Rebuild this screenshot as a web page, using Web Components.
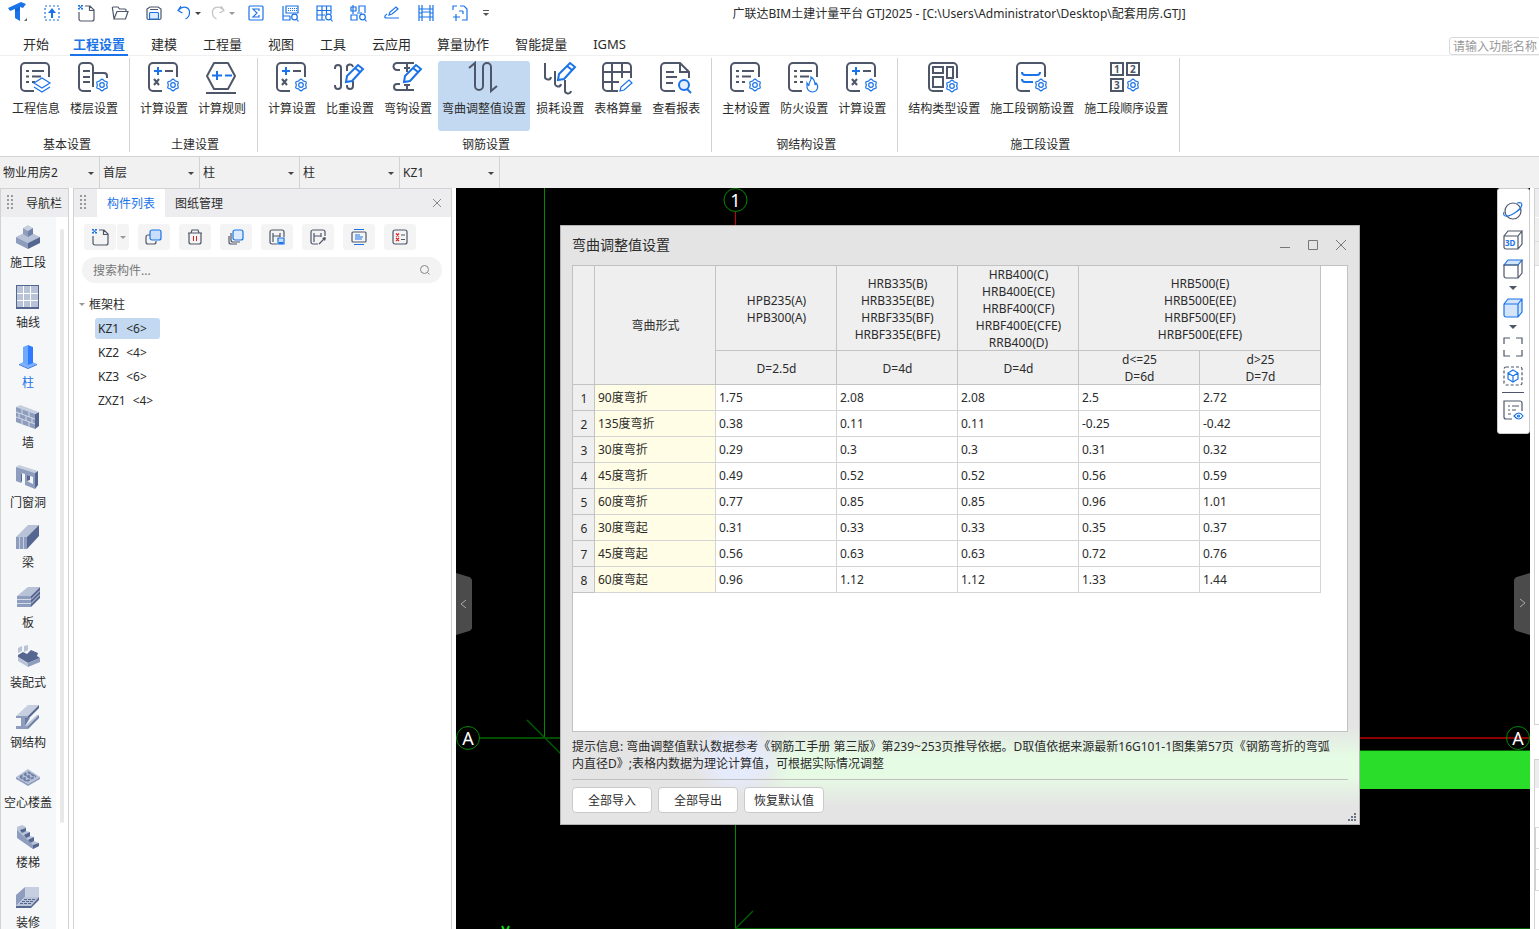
<!DOCTYPE html>
<html lang="zh-CN">
<head>
<meta charset="utf-8">
<title>广联达BIM土建计量平台 GTJ2025</title>
<style>
  html, body {
    margin: 0;
    height: 100%;
  }

  body {
    --blue: #1a73e8;
    --ink: #4e5769;
    --line: #d2d2d2;
    --select: #c2d9f1;
    font: 12px/17px "Noto Sans", "Noto Sans CJK SC", sans-serif;
    color: #2b2b2b;
    background: #fff;
    display: flex;
    flex-direction: column;
    overflow: hidden;
  }

  main {
    flex: 1;
    min-height: 0;
    display: flex;
  }
</style>
</head>
<body>
<title-bar>广联达BIM土建计量平台 GTJ2025 - [C:\Users\Administrator\Desktop\配套用房.GTJ]</title-bar>
<menu-bar></menu-bar>
<ribbon-bar>
  <ribbon-group label="基本设置">
    <ribbon-button icon="info">工程信息</ribbon-button>
    <ribbon-button icon="floor">楼层设置</ribbon-button>
  </ribbon-group>
  <ribbon-group label="土建设置">
    <ribbon-button icon="calc">计算设置</ribbon-button>
    <ribbon-button icon="rule">计算规则</ribbon-button>
  </ribbon-group>
  <ribbon-group label="钢筋设置">
    <ribbon-button icon="calc">计算设置</ribbon-button>
    <ribbon-button icon="weight">比重设置</ribbon-button>
    <ribbon-button icon="hook">弯钩设置</ribbon-button>
    <ribbon-button icon="bend" active>弯曲调整值设置</ribbon-button>
    <ribbon-button icon="loss">损耗设置</ribbon-button>
    <ribbon-button icon="sheet">表格算量</ribbon-button>
    <ribbon-button icon="report">查看报表</ribbon-button>
  </ribbon-group>
  <ribbon-group label="钢结构设置">
    <ribbon-button icon="material">主材设置</ribbon-button>
    <ribbon-button icon="fire">防火设置</ribbon-button>
    <ribbon-button icon="calc">计算设置</ribbon-button>
  </ribbon-group>
  <ribbon-group label="施工段设置">
    <ribbon-button icon="struct">结构类型设置</ribbon-button>
    <ribbon-button icon="rebar">施工段钢筋设置</ribbon-button>
    <ribbon-button icon="order">施工段顺序设置</ribbon-button>
  </ribbon-group>
</ribbon-bar>
<filter-bar></filter-bar>
<main>
  <nav-panel></nav-panel>
  <component-panel></component-panel>
  <drawing-view>
    <view-tools slot="tools"></view-tools>
    <bend-dialog slot="dialog"></bend-dialog>
  </drawing-view>
  <side-strip></side-strip>
</main>

<script>
// six-lobed settings gear
function gear(cx, cy, r = 6) {
  let d = "";
  for (let i = 0; i <= 24; i++) {
    const a = (i / 24) * Math.PI * 2;
    const k = r - 0.7 + 0.7 * Math.cos(a * 6);
    d += (i ? "L" : "M") + (cx + k * Math.sin(a)).toFixed(1) + " " + (cy - k * Math.cos(a)).toFixed(1);
  }
  return `<path class="b t" d="${d}z"/><circle class="b t" cx="${cx}" cy="${cy}" r="2.3"/>`;
}

const openFrame = '<path class="d" d="M29 16V6a4 4 0 0 0-4-4H5a4 4 0 0 0-4 4v20a4 4 0 0 0 4 4h9"/>';
const listRows = '<path class="d" d="M6 10h3M12 10h12M6 15.5h3M12 15.5h9M6 21h3M12 21h3"/>';
const pencil = (x, y) => `<g transform="translate(${x} ${y})"><path class="b" fill="#fff" d="M1 18l1-6L13 1l5 4L7 17zM10 4l5 4"/></g>`;
const page = '<path class="d t" d="M9 3h5l4 4v9a2 2 0 0 1-2 2H5a2 2 0 0 1-2-2V9M13.5 3v4.5H18"/>' +
  '<path fill="#1a73e8" d="M2 2h2v1.5H2zM5 2h2v1.5H5zM3.5 3.5h2V5h-2zM2 5h2v1.5H2zM5 5h2v1.5H5z"/>';
const lens = '<circle class="b t" cx="14.5" cy="14" r="2.8"/><path class="b t" d="M16.5 16l2 2.5"/>';

// name: [viewBox size, markup]
const ICONS = {
  logo: [24, '<path fill="#1a73e8" d="M2 7L15 1l5 2-3 4-3-1v14l-5-3V8L4 10z"/><path fill="#0b4fd0" d="M9 8l5-2v3l-5 2z" opacity=".4"/><path fill="#666" d="M21 17v3h-3z"/>'],
  upload: [20, '<path class="b t" stroke-dasharray="2 2" d="M3 3h14v14H3z"/><path fill="#1a73e8" d="M10 5l4 5h-3v5H9v-5H6z"/>'],
  page: [20, page],
  open: [20, '<path class="d t" d="M4 16L2.5 5.5a1 1 0 0 1 1-1.5H8l1.5 2H15a1 1 0 0 1 1 1v1.5M4 16h11.5L18 8.5H7z"/>'],
  save: [20, '<path class="d t" d="M3 15V6l3-2h8l3 2v9a1.5 1.5 0 0 1-1.5 1.5h-11A1.5 1.5 0 0 1 3 15zM6 6.5h8"/><path class="b t" fill="#dcebff" d="M5.5 16v-5.5a1 1 0 0 1 1-1h7a1 1 0 0 1 1 1V16z"/>'],
  undo: [20, '<path class="b t" d="M7 3L4 7.5 8.5 10M4.5 7C9 2 16 4 15.500 10c0 3-2 5-4 6"/>'],
  redo: [20, '<path fill="none" stroke="#c4c4c4" stroke-width="1.3" d="M13 3l3 4.5-4.5 2.5M15.5 7C11 2 4 4 4.500 10c0 3 2 5 4 6"/>'],
  sum: [20, '<rect class="b t" x="3" y="3" width="14" height="14" rx="1"/><path class="b t" d="M13 8V6H7l4 4-4 4h6v-2"/>'],
  calcView: [20, '<path class="b t" d="M6 3h12v7H6zM3 3v14h7v-4M3 13h7"/><path stroke="#1a73e8" stroke-dasharray="1 1" d="M8 5.5h9M8 7.5h9"/>' + lens],
  gridView: [20, '<path class="b t" d="M11 17H3V3h14v8M3 7.5h14M3 12h8M8 3v14M12.5 3v8"/>' + lens],
  shapeView: [20, '<path class="b t" d="M3 4h5v4H3zM5 2v9M3 12h6v5H3zM11 9V3h6v7M9 10h5"/>' + lens],
  draw: [20, '<path class="b t" d="M7 12l1-3 6-5 2 2-6 5zM5 11c-3 2-3 4 0 4h12"/>'],
  film: [20, '<path class="b t" d="M3 2v16M6 2v16M14 2v16M17 2v16M3 6h14M3 14h14M6 9h8M3 10h3M14 10h3"/>'],
  select: [20, '<path class="b t" d="M3 7V3h4M10 3h4l3 3v8M17 14v3h-5M3 14h7M6 11v7M9 8h4M13 8v3"/>'],
  more: [10, '<path stroke="#555" d="M2 2.5h6"/><path fill="#555" d="M2 5h6L5 8z"/>'],
  caret: [8, '<path fill="#444" d="M1 3h6L4 6z"/>'],
  caretGrey: [8, '<path fill="#999" d="M1 3h6L4 6z"/>'],
  caretWide: [8, '<path fill="#4e5769" d="M0 2h8L4 6z"/>'],

  info: [32, openFrame + listRows + '<path fill="#fff" class="b t" d="M14 22l8-5 8 5-8 5zM14 26l8 5 8-5"/>'],
  floor: [32, '<path class="d" d="M13 30H5a4 4 0 0 1-4-4V6a4 4 0 0 1 4-4h6a4 4 0 0 1 4 4v20M5 10h7M5 16h7M5 21h7M15 12h11a3 3 0 0 1 3 3v2"/>' + gear(24, 24)],
  calc: [32, openFrame + '<path class="b" d="M10 6v8M6 10h8"/><path class="d" d="M17 10h8M6 18l5 6M11 18l-5 6"/>' + gear(25, 24)],
  rule: [32, '<path class="d" stroke-linejoin="round" d="M1 15L8 2h14l7 13-7 13H8zM0 32h30"/><path class="b" d="M11 10v9M6 14.5h10M19 14.5h7"/>'],
  weight: [32, '<path class="d" d="M1 8V7a3 3 0 0 1 6 0v18a3 3 0 0 1-6 0v-1M13 10V7a3 3 0 0 1 6-1M19 20v5a3 3 0 0 1-6 0v-1"/>' + pencil(11, 3)],
  hook: [32, '<path class="d" d="M22 2H5a3 3 0 0 0 0 7h3M15 2v9M12 7h6M22 29H5a3 3 0 0 1 0-6h3M15 23v6M12 24h6"/>' + pencil(11, 3)],
  bend: [32, '<path class="d" d="M1 7l6-5v23a4 4 0 0 0 8 0V6a4 4 0 0 1 8 0v24l6-5"/>'],
  loss: [32, '<path class="d" d="M1 2v13a3 3 0 0 0 6 1M11 10v12a3 3 0 0 0 6 1M21 19v10a3 3 0 0 0 6 1"/>' + pencil(13, 1)],
  sheet: [32, '<path class="d" d="M29 17V6a4 4 0 0 0-4-4H5a4 4 0 0 0-4 4v20a4 4 0 0 0 4 4h11M1 11h28M1 21h16M10 2v28M20 2v15"/><path class="b t" fill="#fff" d="M18 30l1-4 8-7 3 3-8 7z"/>'],
  report: [32, '<path class="d" d="M15 30H5a4 4 0 0 1-4-4V6a4 4 0 0 1 4-4h15l9 9v6M20 3v8h8M6 11h8M6 16h11M6 22h7"/><circle class="b" cx="24" cy="24" r="5" fill="#e4efff"/><path class="b" d="M27 28l4 4"/>'],
  material: [32, openFrame + listRows + gear(25, 24)],
  fire: [32, openFrame + listRows + '<path class="b t" fill="#fff" d="M19 22c0 3-1 8 5 9 6 0 7-6 4-9l-1 2c0-4-1-6-4-8 1 4-3 5-2 9z"/>'],
  struct: [32, '<path class="d" d="M29 17V6a4 4 0 0 0-4-4H5a4 4 0 0 0-4 4v20a4 4 0 0 0 4 4h10M5 6h10v6H5zM19 6h6v11h-6zM5 16h10v10H5z"/>' + gear(24, 25)],
  rebar: [32, openFrame + '<path class="b" d="M6 11q0 3 3 3h12q3 0 3-3M6 18q0 3 3 3h8"/>' + gear(25, 24)],
  order: [32, '<path class="d" d="M1 2h12v12H1zM17 2h12v12H17zM1 18h12v12H1z"/><text x="4" y="12">1</text><text x="20" y="12">2</text><text x="4" y="28">3</text>' + gear(23, 24)],

  copy: [20, '<path class="d t" d="M6 8H4a2 2 0 0 0-2 2v5a2 2 0 0 0 2 2h6a2 2 0 0 0 2-2v-1"/><rect class="b t" x="6" y="3" width="11" height="10" rx="2" fill="#c9defa"/>'],
  trash: [20, '<path class="d t" d="M3 6h14M6 6l1-3h6l1 3M4 6v9a2 2 0 0 0 2 2h8a2 2 0 0 0 2-2V6"/><path stroke="#e02020" d="M8.5 9v5M11.5 9v5"/>'],
  layers: [20, '<path class="d t" d="M5 6v7a2 2 0 0 0 2 2h7M3 9v6a2 2 0 0 0 2 2h6"/><rect class="b t" x="7" y="3" width="10" height="10" rx="2" fill="#dcebff"/>'],
  saveCom: [20, '<path class="d t" d="M10 17H5a2 2 0 0 1-2-2V5a2 2 0 0 1 2-2h10a2 2 0 0 1 2 2v5M6 6v9M6 9h7M13 6v4"/><path class="b t" fill="#c9defa" d="M11 11h6v6h-6z"/><path fill="#1a73e8" d="M12 15h4v2h-4z"/>'],
  pickCom: [20, '<path class="d t" d="M10 17H5a2 2 0 0 1-2-2V5a2 2 0 0 1 2-2h10a2 2 0 0 1 2 2v4M6 6v9M6 9h7M13 6v4M11 17l5-5"/><path fill="#4e5769" d="M14 11l3-1 1 1-1 3z"/>'],
  sort: [20, '<path class="b t" d="M5 2.500h10M5 17.500h10"/><rect class="d t" x="3" y="5" width="14" height="10" rx="1"/><path class="b t" d="M6 8h5M6 10h8M6 12h7"/>'],
  check: [20, '<rect class="d t" x="3" y="3" width="14" height="14" rx="2"/><path class="d t" d="M11 8h4M11 12.5h4"/><path stroke="#e02020" stroke-width="1.2" d="M6 6.5l3 3M9 6.5l-3 3M6 11l3 3M9 11l-3 3"/>'],
  search: [14, '<circle cx="6.5" cy="6.5" r="4" fill="none" stroke="#888"/><path stroke="#888" d="M9.5 9.5l2 2"/>'],
  close: [12, '<path stroke="#888" d="M2 2l8 8M10 2l-8 8"/>'],

  stage: [24, '<path fill="#b9c3d8" d="M0 12l12-6 12 6-12 6z"/><path fill="#8e9dbd" d="M0 12l12 6v6L0 18z"/><path fill="#556691" d="M24 12l-12 6v6l12-6z"/><path fill="#c6cfdf" d="M7 3l5-3 5 3-5 3z"/><path fill="#8e9dbd" d="M7 3l5 3v6l-5-3z"/><path fill="#6f80a6" d="M17 3l-5 3v6l5-3z"/>'],
  axis: [24, '<path fill="#556691" d="M0 0h23v24H0z"/><path fill="#b9c3d8" d="M1 1h21v21H1z"/><path stroke="#fff" d="M7.5 1v21M14.5 1v21M1 8.5h21M1 15.5h21"/>'],
  column: [24, '<path fill="#7db0ff" d="M3 19l9-4 9 4-9 4z"/><path fill="#2f6fe8" d="M3 19l9 4v1l-9-4zM21 19l-9 4v1l9-4z"/><path fill="#6ea8ff" d="M7 2l5-2v20l-5-2z"/><path fill="#2f7bff" d="M12 0l5 2v16l-5 2z"/>'],
  wall: [24, '<path fill="#556691" d="M19 9l4-2v14l-4 3z"/><path fill="#c6cfdf" d="M0 2l4-2 19 7-4 2z"/><path fill="#8e9dbd" d="M0 2l19 7v15L0 17z"/><path fill="none" stroke="#d3dae8" d="M0 7l19 7M0 12l19 7M6 4v5M13 7v5M3 8v5M10 11v5M16 13v5M6 14v5M13 17v5"/>'],
  door: [24, '<path fill="#c6cfdf" d="M0 2l3-2 19 6-3 2z"/><path fill="#556691" d="M19 8l3-2v14l-3 4z"/><path fill="#8e9dbd" fill-rule="evenodd" d="M0 2l19 6v16L9 20V9L5 8v10l-5-2zM11 10v6l6 3v-7z"/><path fill="#556691" d="M5 8l1 1v7l-1 2zM11 16l3-1v-4l-3-1z"/>'],
  beam: [24, '<path fill="#b9c3d8" d="M0 12L12 0h11L11 12z"/><path fill="#556691" d="M11 12L23 0v11L11 24z"/><path fill="#8e9dbd" d="M0 12h11v12H0z"/><path stroke="#c6cfdf" d="M3.5 12v12M7.5 12v12"/>'],
  slab: [24, '<path fill="#b9c3d8" d="M1 11L12 2h12L15 11z"/><path fill="#8e9dbd" d="M1 11h14v11H1z"/><path fill="#556691" d="M15 11l9-9v11l-9 9z"/><path fill="none" stroke="#d3dae8" d="M1 14.5h14l9-9M1 18.5h14l9-9"/>'],
  precast: [24, '<path fill="#556691" d="M2 10l5-3 4 2 4-4 7 3-1 3 3 2-12 5-10-6z"/><path fill="#b9c3d8" d="M2 3l4-2v5L2 8zM8 1l4-1v5L8 7zM2 12l10 6v4L2 16z"/><path fill="#8e9dbd" d="M12 18l12-5v4l-12 5z"/>'],
  steel: [24, '<path fill="#c6cfdf" d="M0 11L12 0h11L12 11z"/><path fill="#556691" d="M12 11L23 0v3L12 14H9v-3z"/><path fill="#8e9dbd" d="M0 11h12v2H0zM5 13h4v8H5zM0 21h12v3H0z"/><path fill="#b9c3d8" d="M9 21l12-11h2l-11 11z"/><path fill="#6f80a6" d="M9 14l5-1-5 8zM12 21l11-11v3L12 24z"/>'],
  hollow: [24, '<path fill="#b9c3d8" d="M0 12l12-8 12 8-12 7z"/><path fill="#8e9dbd" d="M0 12l12 7 12-7v2l-12 7L0 14z"/><path stroke="#6f80a6" stroke-width="2" stroke-dasharray="3 1.5" d="M4 12l8-5M7 14l9-5M11 16l9-5M4 12l8 5M8 9l8 5M12 7l8 5"/>'],
  stair: [24, '<path fill="#b9c3d8" d="M1 2l5-2 4 2v4l4 1v4l4 1v4l5 2v3l-6 3L1 12z"/><path fill="#556691" d="M4 5l6-2v3l-4 2zM8 10l6-3v4l-4 2zM12 15l6-3v4l-4 2zM17 20l6-2v3l-6 3z"/><path fill="#8e9dbd" d="M1 5l16 15v4L1 13z"/>'],
  finish: [24, '<path fill="#8e9dbd" d="M0 10L9 2v10L0 21z"/><path fill="#c6cfdf" d="M9 2h14v10H9z"/><path fill="#b9c3d8" d="M0 21l9-9h14l-8 9z"/><path fill="#556691" d="M15 21l8-9v3l-8 8H0v-2z"/><path fill="none" stroke="#556691" stroke-dasharray="3 1" d="M8 14.500h12M6 16.500h12M4 18.500h12"/>'],

  orbit: [20, '<circle class="d t" cx="10" cy="10" r="8"/><path class="b t" d="M14 2c8-2 5 5-1 9-7 5-14 6-12 0"/>'],
  cube3d: [20, '<path class="d t" d="M1 6h14v13H3a2 2 0 0 1-2-2zM1 6l4-5h14l-4 5M19 1v13l-4 5"/><text class="s" x="2" y="16">3D</text>'],
  cubeTop: [20, '<path class="b t" fill="#d3e4fb" d="M1 6l4-5h14l-4 5z"/><path class="d t" d="M1 6h14v13H3a2 2 0 0 1-2-2zM19 1v13l-4 5"/>'],
  cubeFull: [20, '<path class="b t" fill="#d3e4fb" d="M1 6l4-5h14v13l-4 5H3a2 2 0 0 1-2-2zM1 6h14v13M15 6l4-5"/>'],
  frame: [20, '<path class="d t" d="M1 7V1h6M13 1h6v6M19 13v6h-6M7 19H1v-6"/>'],
  cubeDash: [20, '<rect class="d t" stroke-dasharray="3 2" x="1" y="1" width="18" height="18" rx="2"/><path class="b t" d="M10 4l5 3v6l-5 3-5-3V7zM5 7l5 3 5-3M10 10v6"/>'],
  display: [20, '<path class="d t" d="M19 11V3a2 2 0 0 0-2-2H1v16a2 2 0 0 0 2 2h6M5 6h2M9 6h7M5 10h2M9 10h4M5 14h3"/><path class="b t" d="M11 16q5-6 9 0-4 6-9 0z"/><circle class="b t" cx="15.5" cy="16" r="1"/>'],
};

class UiIcon extends HTMLElement {
  connectedCallback() {
    const [size, art] = ICONS[this.getAttribute("name")];
    this.attachShadow({ mode: "open" }).innerHTML = `
      <style>
        :host { display: block; flex: none; }
        svg { display: block; overflow: visible; }
        .d, .b { stroke-width: 2; }
        .d { stroke: var(--ink); }
        .b { stroke: var(--blue); }
        .d:not([fill]), .b:not([fill]) { fill: none; }
        .t { stroke-width: 1.2; }
        text { font: bold 10px "Noto Sans", sans-serif; fill: var(--ink); }
        .s { font-size: 8px; fill: var(--blue); }
      </style>
      <svg width="${size}" height="${size}" viewBox="0 0 ${size} ${size}" aria-hidden="true">${art}</svg>
    `;
  }
}
customElements.define("ui-icon", UiIcon);

class TitleBar extends HTMLElement {
  constructor() {
    super();
    this.attachShadow({ mode: "open" });
    const tools = ["logo", "upload", "page", "open", "save", "undo", "redo", "sum", "calcView",
      "gridView", "shapeView", "draw", "film", "select"];
    this.shadowRoot.innerHTML = `
      <style>
        :host { display: flex; box-sizing: border-box; height: 28px; padding: 0 0 2px 1px; align-items: center; }
        button {
          display: flex;
          align-items: center;
          justify-content: center;
          width: 34px;
          height: 26px;
          padding: 0;
          border: 0;
          background: none;
        }
        button.more { width: 18px; }
        h1 { flex: 1; margin: 0; padding-right: 116px; font: inherit; text-align: center; white-space: nowrap; }
      </style>
      ${tools.map((t) => `<button aria-label="${t}"><ui-icon name="${t}"></ui-icon>${
        t === "undo" ? '<ui-icon name="caret"></ui-icon>' : t === "redo" ? '<ui-icon name="caretGrey"></ui-icon>' : ""
      }</button>`).join("")}
      <button class="more" aria-label="more"><ui-icon name="more"></ui-icon></button>
      <h1><slot></slot></h1>
    `;
  }
}
customElements.define("title-bar", TitleBar);

class MenuBar extends HTMLElement {
  constructor() {
    super();
    this.attachShadow({ mode: "open" });
    const items = ["开始", "工程设置", "建模", "工程量", "视图", "工具", "云应用", "算量协作", "智能提量", "IGMS"];
    this.shadowRoot.innerHTML = `
      <style>
        :host {
          display: flex;
          justify-content: space-between;
          height: 27px;
          border-bottom: 1px solid #f0f0f0;
          font-size: 13px;
        }
        nav { display: flex; padding-left: 10px; }
        a {
          height: 28px;
          margin: 0 10px;
          padding: 0 3px;
          color: inherit;
          text-decoration: none;
          line-height: 32px;
        }
        a.on {
          margin: 0 10px 0 8px;
          color: var(--blue);
          font-weight: bold;
          box-shadow: inset 0 -2px var(--blue);
        }
        input {
          box-sizing: border-box;
          width: 92px;
          height: 18px;
          margin: 9px -2px 0 0;
          padding: 0 3px;
          border: 1px solid #d9d9d9;
          border-radius: 3px;
          font: inherit;
          font-size: 12px;
        }
        input::placeholder { color: #999; opacity: 1; }
      </style>
      <nav>${items.map((t, i) => `<a href="#"${i === 1 ? ' class="on"' : ""}>${t}</a>`).join("")}</nav>
      <input type="text" placeholder="请输入功能名称或" aria-label="功能搜索">
    `;
  }
}
customElements.define("menu-bar", MenuBar);

class RibbonBar extends HTMLElement {
  constructor() {
    super();
    this.attachShadow({ mode: "open" });
    this.shadowRoot.innerHTML = `
      <style>
        :host {
          display: flex;
          box-sizing: border-box;
          height: 101px;
          padding: 2px 0 4px 2px;
          border-bottom: 1px solid var(--line);
        }
      </style>
      <slot></slot>
    `;
  }
}
customElements.define("ribbon-bar", RibbonBar);

class RibbonGroup extends HTMLElement {
  constructor() {
    super();
    this.attachShadow({ mode: "open" });
    this.shadowRoot.innerHTML = `
      <style>
        :host {
          display: flex;
          flex-direction: column;
          align-items: center;
          gap: 5px;
          padding: 3px 6px 0 5px;
          border-right: 1px solid var(--line);
          white-space: nowrap;
        }
        .row { display: flex; }
        .label { padding-left: 4px; }
      </style>
      <div class="row"><slot></slot></div>
      <span class="label">${this.getAttribute("label")}</span>
    `;
  }
}
customElements.define("ribbon-group", RibbonGroup);

class RibbonButton extends HTMLElement {
  constructor() {
    super();
    this.attachShadow({ mode: "open" });
    this.shadowRoot.innerHTML = `
      <style>
        :host { display: block; margin: 0 1px; }
        button {
          display: flex;
          flex-direction: column;
          align-items: center;
          gap: 7px;
          height: 70px;
          padding: 0 4px;
          border: 0;
          border-radius: 3px;
          background: none;
          font: inherit;
          color: inherit;
          white-space: nowrap;
        }
        :host([active]) button { background: var(--select); }
      </style>
      <button><ui-icon name="${this.getAttribute("icon")}"></ui-icon><span><slot></slot></span></button>
    `;
  }
}
customElements.define("ribbon-button", RibbonButton);

class FilterBar extends HTMLElement {
  constructor() {
    super();
    this.attachShadow({ mode: "open" });
    const filters = [["工程", "物业用房2"], ["楼层", "首层"], ["类型", "柱"], ["构件类型", "柱"], ["构件", "KZ1"]];
    this.shadowRoot.innerHTML = `
      <style>
        :host { display: flex; height: 31px; background: #f1f1f1; }
        label { position: relative; display: flex; box-sizing: border-box; width: 100px; border-right: 1px solid var(--line); }
        select {
          appearance: none;
          flex: 1;
          padding: 0 16px 0 3px;
          border: 0;
          background: none;
          font: inherit;
          color: inherit;
        }
        ui-icon { position: absolute; right: 4px; top: 12px; pointer-events: none; }
      </style>
      ${filters.map(([name, value]) => `
        <label><select aria-label="${name}"><option>${value}</option></select><ui-icon name="caret"></ui-icon></label>
      `).join("")}
    `;
  }
}
customElements.define("filter-bar", FilterBar);

// dotted handle at the left of a panel header
class PanelGrip extends HTMLElement {
  constructor() {
    super();
    this.attachShadow({ mode: "open" });
    this.shadowRoot.innerHTML = `
      <style>
        :host {
          display: block;
          flex: none;
          width: 8px;
          height: 16px;
          background: conic-gradient(from 0deg at 2px 2px, transparent 75%, #999 0) 0 0 / 4px 4px;
        }
      </style>
    `;
  }
}
customElements.define("panel-grip", PanelGrip);

class NavPanel extends HTMLElement {
  constructor() {
    super();
    this.attachShadow({ mode: "open" });
    const items = [["stage", "施工段"], ["axis", "轴线"], ["column", "柱"], ["wall", "墙"], ["door", "门窗洞"],
      ["beam", "梁"], ["slab", "板"], ["precast", "装配式"], ["steel", "钢结构"], ["hollow", "空心楼盖"],
      ["stair", "楼梯"], ["finish", "装修"]];
    this.shadowRoot.innerHTML = `
      <style>
        :host {
          display: flex;
          flex-direction: column;
          box-sizing: border-box;
          width: 69px;
          border: 1px solid var(--line);
          border-bottom: 0;
        }
        header { display: flex; align-items: center; gap: 11px; height: 28px; padding-left: 6px; background: #ededef; white-space: nowrap; }
        .body { display: flex; flex: 1; min-height: 0; gap: 4px; }
        nav { width: 55px; background: #f5f7f9; overflow: hidden; }
        a {
          display: flex;
          flex-direction: column;
          align-items: center;
          gap: 5px;
          height: 52px;
          padding: 8px 1px 0 0;
          color: inherit;
          text-decoration: none;
          white-space: nowrap;
        }
        a.on { color: var(--blue); }
        .thumb { width: 4px; height: 594px; margin-top: 12px; border-radius: 2px; background: #e8e8e8; }
      </style>
      <header><panel-grip></panel-grip><span>导航栏</span></header>
      <div class="body">
        <nav>${items.map(([icon, text]) => `
          <a href="#"${icon === "column" ? ' class="on"' : ""}><ui-icon name="${icon}"></ui-icon>${text}</a>`).join("")}
        </nav>
        <div class="thumb"></div>
      </div>
    `;
  }
}
customElements.define("nav-panel", NavPanel);

class ComponentPanel extends HTMLElement {
  constructor() {
    super();
    this.attachShadow({ mode: "open" });
    const tools = ["copy", "trash", "layers", "saveCom", "pickCom", "sort", "check"];
    const rows = [["KZ1", "<6>"], ["KZ2", "<4>"], ["KZ3", "<6>"], ["ZXZ1", "<4>"]];
    const esc = (s) => s.replace("<", "&lt;").replace(">", "&gt;");
    this.shadowRoot.innerHTML = `
      <style>
        :host {
          display: flex;
          flex-direction: column;
          box-sizing: border-box;
          width: 379px;
          margin: 0 4px;
          border: 1px solid var(--line);
          border-bottom: 0;
        }
        button { border: 0; padding: 0; background: none; font: inherit; color: inherit; }
        header { display: flex; align-items: center; height: 28px; padding: 0 8px 0 6px; background: #ededef; }
        panel-grip { margin-right: 9px; }
        .tab { height: 28px; padding: 0 10px; }
        .tab.on { background: #fff; color: var(--blue); }
        .x { margin-left: auto; }
        .tools { display: flex; gap: 9px; padding: 7px 10px; }
        .tools button, .split { display: flex; align-items: center; justify-content: center; width: 32px; height: 26px; border-radius: 3px; background: #f4f4f4; }
        .split { width: 45px; gap: 1px; background: #fff; }
        .split button + button { width: 12px; }
        .search { display: flex; align-items: center; height: 26px; margin: 0 9px 0 8px; padding: 0 10px 0 11px; border-radius: 13px; background: #f3f3f3; }
        input { flex: 1; padding: 0; border: 0; outline: 0; background: none; font: inherit; }
        input::placeholder { color: #777; opacity: 1; }
        ul { margin: 9px 0 0; padding: 0; list-style: none; }
        .root { display: flex; align-items: center; height: 24px; padding-left: 4px; gap: 3px; }
        li button { display: flex; align-items: center; gap: 7px; height: 21px; margin: 2px 0 3px 21px; padding: 0 13px 0 3px; border-radius: 3px; }
        li button.on { background: var(--select); }
      </style>
      <header>
        <panel-grip></panel-grip>
        <button class="tab on">构件列表</button>
        <button class="tab">图纸管理</button>
        <button class="x" aria-label="关闭"><ui-icon name="close"></ui-icon></button>
      </header>
      <div class="tools">
        <div class="split">
          <button aria-label="新建"><ui-icon name="page"></ui-icon></button>
          <button aria-label="新建选项"><ui-icon name="caretGrey"></ui-icon></button>
        </div>
        ${tools.map((t) => `<button aria-label="${t}"><ui-icon name="${t}"></ui-icon></button>`).join("")}
      </div>
      <label class="search">
        <input type="text" placeholder="搜索构件..." aria-label="搜索构件">
        <ui-icon name="search"></ui-icon>
      </label>
      <ul>
        <li class="root"><ui-icon name="caretGrey"></ui-icon>框架柱</li>
        ${rows.map(([n, c], i) => `<li><button${i ? "" : ' class="on"'}><span>${n}</span> <span>${esc(c)}</span></button></li>`).join("")}
      </ul>
    `;
  }
}
customElements.define("component-panel", ComponentPanel);

class DrawingView extends HTMLElement {
  constructor() {
    super();
    this.attachShadow({ mode: "open" });
    this.shadowRoot.innerHTML = `
      <style>
        :host { position: relative; display: block; flex: 1; min-width: 0; background: #000; overflow: hidden; }
        svg { position: absolute; left: 0; top: 0; width: 100%; height: 100%; }
        svg.end { left: auto; right: 0; width: 24px; }
        text { font: 18px "Noto Sans", sans-serif; fill: #fff; text-anchor: middle; }
        .axis { stroke: #008a00; }
        .dim { stroke: #006000; }
        .bubble { fill: #000; stroke: #008a00; }
        .end .bubble { fill: none; }
        button {
          position: absolute;
          top: 385px;
          width: 16px;
          height: 62px;
          padding: 0;
          border: 0;
          background: #4b4b4b;
        }
        button path { fill: none; stroke: #aaa; }
        .left { left: 0; clip-path: polygon(0 0, 88% 7%, 100% 11%, 100% 89%, 88% 93%, 0 100%); }
        .right { right: 0; clip-path: polygon(100% 0, 12% 7%, 0 11%, 0 89%, 12% 93%, 100% 100%); }
        slot[name="dialog"] { position: absolute; left: 104px; top: 37px; display: block; }
        slot[name="tools"] { position: absolute; right: 0; top: 0; display: block; }
      </style>
      <svg>
        <path class="axis" d="M88.5 0v550M279.5 636v105"/>
        <path stroke="#d00000" d="M279.5 24v18"/>
        <path class="dim" stroke-width="1.4" d="M71 532l40 40M279 741l18-18"/>
        <path stroke="#004d00" stroke-width="2" d="M24 550h100"/>
        <line x1="800" x2="100%" y1="550" y2="550" stroke="#8b0000" stroke-width="2"/>
        <line x1="280" x2="100%" y1="740.5" y2="740.5" class="dim"/>
        <line x1="800" x2="100%" y1="562.5" y2="562.5" class="dim"/>
        <rect x="800" y="563" width="100%" height="38" fill="#2bdd2b"/>
        <path d="M46 738l2 4M53 738l-2 4" stroke="#00e000" stroke-width="2"/>
        <circle class="bubble" cx="279.5" cy="12" r="11.5"/>
        <text x="279.5" y="19">1</text>
        <circle class="bubble" cx="12" cy="550" r="11.5"/>
        <text x="12" y="557">A</text>
      </svg>
      <svg class="end">
        <circle class="bubble" cx="12" cy="550" r="11.5"/>
        <text x="12" y="557">A</text>
      </svg>
      <button class="left" aria-label="收起左侧"><svg><path d="M10 27l-5 4 5 4"/></svg></button>
      <button class="right" aria-label="展开右侧"><svg><path d="M6 26l5 4-5 4"/></svg></button>
      <slot name="dialog"></slot>
      <slot name="tools"></slot>
    `;
  }
}
customElements.define("drawing-view", DrawingView);

class ViewTools extends HTMLElement {
  constructor() {
    super();
    this.attachShadow({ mode: "open" });
    this.shadowRoot.innerHTML = `
      <style>
        :host {
          display: flex;
          flex-direction: column;
          align-items: center;
          box-sizing: border-box;
          width: 33px;
          height: 246px;
          padding: 7px 1px 0 0;
          border: 1px solid #ccc;
          border-radius: 3px;
          background: #fff;
        }
        button { display: flex; align-items: center; justify-content: center; width: 28px; height: 29px; padding: 0; border: 0; background: none; }
        .drop { height: 10px; }
        hr { width: 22px; height: 1px; margin: 2px 0; border: 0; background: #4e5769; }
      </style>
      <button aria-label="动态观察"><ui-icon name="orbit"></ui-icon></button>
      <button aria-label="三维"><ui-icon name="cube3d"></ui-icon></button>
      <button aria-label="俯视"><ui-icon name="cubeTop"></ui-icon></button>
      <button class="drop" aria-label="视图方向"><ui-icon name="caretWide"></ui-icon></button>
      <button aria-label="着色"><ui-icon name="cubeFull"></ui-icon></button>
      <button class="drop" aria-label="着色方式"><ui-icon name="caretWide"></ui-icon></button>
      <button aria-label="全屏"><ui-icon name="frame"></ui-icon></button>
      <button aria-label="局部三维"><ui-icon name="cubeDash"></ui-icon></button>
      <hr>
      <button aria-label="显示设置"><ui-icon name="display"></ui-icon></button>
    `;
  }
}
customElements.define("view-tools", ViewTools);

class BendDialog extends HTMLElement {
  constructor() {
    super();
    this.attachShadow({ mode: "open" });
    const data = [
      ["90度弯折", "1.75", "2.08", "2.08", "2.5", "2.72"],
      ["135度弯折", "0.38", "0.11", "0.11", "-0.25", "-0.42"],
      ["30度弯折", "0.29", "0.3", "0.3", "0.31", "0.32"],
      ["45度弯折", "0.49", "0.52", "0.52", "0.56", "0.59"],
      ["60度弯折", "0.77", "0.85", "0.85", "0.96", "1.01"],
      ["30度弯起", "0.31", "0.33", "0.33", "0.35", "0.37"],
      ["45度弯起", "0.56", "0.63", "0.63", "0.72", "0.76"],
      ["60度弯起", "0.96", "1.12", "1.12", "1.33", "1.44"],
    ];
    this.shadowRoot.innerHTML = `
      <style>
        :host {
          display: flex;
          flex-direction: column;
          position: relative;
          box-sizing: border-box;
          width: 800px;
          height: 600px;
          padding: 0 11px 11px;
          border: 1px solid #b4b4b4;
          background:
            radial-gradient(45px 35px at 176px 535px, #e6ebfb 50%, transparent),
            linear-gradient(90deg, #e4e4e4 190px, transparent 230px),
            linear-gradient(#e4e4e4 500px, #e6fbe4 530px, #e6fbe4 550px, #e4e4e4 580px);
        }
        header { display: flex; align-items: center; height: 37px; margin: 0 -7px 2px 0; }
        h2 { flex: 1; margin: 0; font: inherit; font-size: 14px; }
        header button { width: 28px; height: 28px; padding: 0; border: 0; background: none; }
        header svg { display: block; margin: auto; fill: none; stroke: #777; }
        .frame { flex: 1; border: 1px solid #c2c2c2; background: #fff; }
        table { table-layout: fixed; width: 748px; border-spacing: 0; }
        th, td { padding: 0 3px 2px; text-align: left; font-weight: normal; box-shadow: inset -1px -1px #d4d4d4; }
        thead th, .no { padding: 0; text-align: center; background: #efefef; box-shadow: inset -1px -1px #c3c3c3; }
        .kinds { height: 85px; }
        .dia { height: 34px; }
        tbody tr { height: 26px; }
        .name { background: #fffde6; }
        p { margin: 6px 0 7px; padding: 0 8px 7px 0; border-bottom: 1px solid #c0c0c0; }
        footer { display: flex; gap: 6px; }
        footer button { width: 80px; height: 26px; padding: 0; border: 1px solid #cbcbcb; border-radius: 4px; background: #fff; font: inherit; color: inherit; white-space: nowrap; }
        .grip { position: absolute; right: 2px; bottom: 2px; }
      </style>
      <header>
        <h2>弯曲调整值设置</h2>
        <button aria-label="最小化"><svg width="12" height="12"><path d="M1 8.5h10"/></svg></button>
        <button aria-label="最大化"><svg width="12" height="12"><path d="M1.5 1.5h9v9h-9z"/></svg></button>
        <button aria-label="关闭"><svg width="12" height="12"><path d="M1 1l10 10M11 1L1 11"/></svg></button>
      </header>
      <div class="frame">
        <table>
          <colgroup><col style="width: 22px"><col span="6" style="width: 121px"></colgroup>
          <thead>
            <tr class="kinds">
              <th rowspan="2"></th>
              <th rowspan="2">弯曲形式</th>
              <th>HPB235(A)<br>HPB300(A)</th>
              <th>HRB335(B)<br>HRB335E(BE)<br>HRBF335(BF)<br>HRBF335E(BFE)</th>
              <th>HRB400(C)<br>HRB400E(CE)<br>HRBF400(CF)<br>HRBF400E(CFE)<br>RRB400(D)</th>
              <th colspan="2">HRB500(E)<br>HRB500E(EE)<br>HRBF500(EF)<br>HRBF500E(EFE)</th>
            </tr>
            <tr class="dia">
              <th>D=2.5d</th><th>D=4d</th><th>D=4d</th><th>d&lt;=25<br>D=6d</th><th>d&gt;25<br>D=7d</th>
            </tr>
          </thead>
          <tbody>
            ${data.map(([name, ...v], i) => `
              <tr><th class="no">${i + 1}</th><th class="name">${name}</th>${v.map((n) => `<td>${n}</td>`).join("")}</tr>
            `).join("")}
          </tbody>
        </table>
      </div>
      <p>提示信息: 弯曲调整值默认数据参考《钢筋工手册 第三版》第239~253页推导依据。D取值依据来源最新16G101-1图集第57页《钢筋弯折的弯弧内直径D》;表格内数据为理论计算值，可根据实际情况调整</p>
      <footer>
        <button>全部导入</button>
        <button>全部导出</button>
        <button>恢复默认值</button>
      </footer>
      <svg class="grip" width="9" height="9" fill="#6b7280"><path d="M6 0h2v2H6zM3 3h2v2H3zM6 3h2v2H6zM0 6h2v2H0zM3 6h2v2H3zM6 6h2v2H6z"/></svg>
    `;
  }
}
customElements.define("bend-dialog", BendDialog);

// left edges of the docked property panels
class SideStrip extends HTMLElement {
  constructor() {
    super();
    this.attachShadow({ mode: "open" });
    this.shadowRoot.innerHTML = `
      <style>
        :host { display: flex; flex-direction: column; gap: 34px; width: 5px; padding-left: 4px; }
        section { border: 1px solid var(--line); border-right: 0; }
        .top { height: 535px; }
        .bottom { flex: 1; border-bottom: 0; }
        i { display: block; height: 23px; border-bottom: 1px solid #dcdcdc; background: #efefef; }
        .head { height: 28px; border-color: #fff; background: #ededef; }
        .row { height: 38px; background: #fff; }
        .row ~ .row { height: 20px; border-left: 1px solid var(--line); }
      </style>
      <section class="top"><i class="head"></i><i></i><i></i></section>
      <section class="bottom"><i class="head"></i><i class="row"></i><i class="row"></i><i class="row"></i><i class="row"></i></section>
    `;
  }
}
customElements.define("side-strip", SideStrip);
</script>
</body>
</html>
